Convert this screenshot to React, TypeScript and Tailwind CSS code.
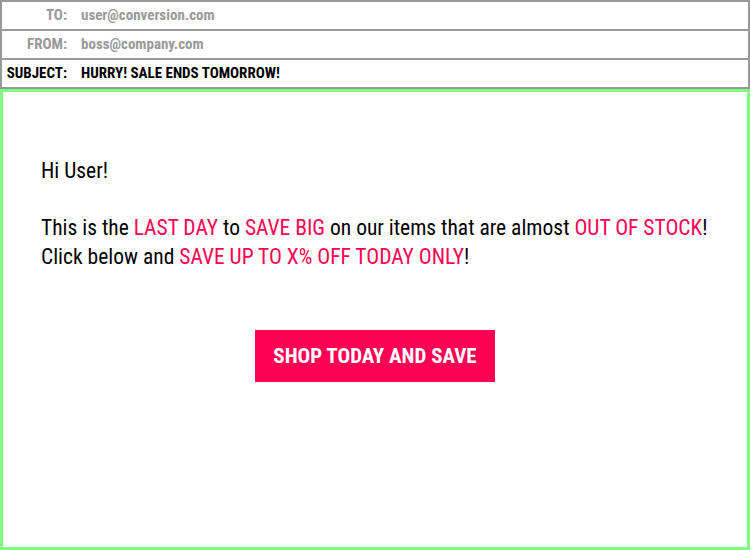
export default function App() {
  const hl = "text-[#ff0055]";
  return (
    <div className="w-[750px] h-[550px] bg-white font-['Roboto_Condensed',sans-serif] flex flex-col">
      <div className="border-2 border-b-0 border-[#999999] flex flex-col">
        <div className="h-[29px] border-b-2 border-[#999999] flex items-center text-[15px] font-bold text-[#999999]">
          <span className="w-[65px] text-right">TO:</span>
          <span className="ml-[14px]">user@conversion.com</span>
        </div>
        <div className="h-[29px] border-b-2 border-[#999999] flex items-center text-[15px] font-bold text-[#999999]">
          <span className="w-[65px] text-right">FROM:</span>
          <span className="ml-[14px]">boss@company.com</span>
        </div>
        <div className="h-[29px] border-b-2 border-[#999999] flex items-center text-[15px] font-bold text-black">
          <span className="w-[65px] text-right">SUBJECT:</span>
          <span className="ml-[14px]">HURRY! SALE ENDS TOMORROW!</span>
        </div>
      </div>
      <div className="flex-1 border-[3px] border-[#80ff80] pl-[38px] pr-[20px] pt-[65px] text-[21.5px] leading-[28.5px] text-black">
        <p>Hi User!</p>
        <p className="mt-[28.5px] whitespace-nowrap">
          This is the <span className={hl}>LAST DAY</span> to <span className={hl}>SAVE BIG</span> on our items that are almost{" "}
          <span className={hl}>OUT OF STOCK</span>!
          <br />
          Click below and <span className={hl}>SAVE UP TO X% OFF TODAY ONLY</span>!
        </p>
        <div className="mt-[59px] flex justify-center pr-[18px]">
          <button className="w-[240px] h-[52px] bg-[#ff0055] text-white font-bold text-[21px] flex items-center justify-center">
            SHOP TODAY AND SAVE
          </button>
        </div>
      </div>
    </div>
  );
}
